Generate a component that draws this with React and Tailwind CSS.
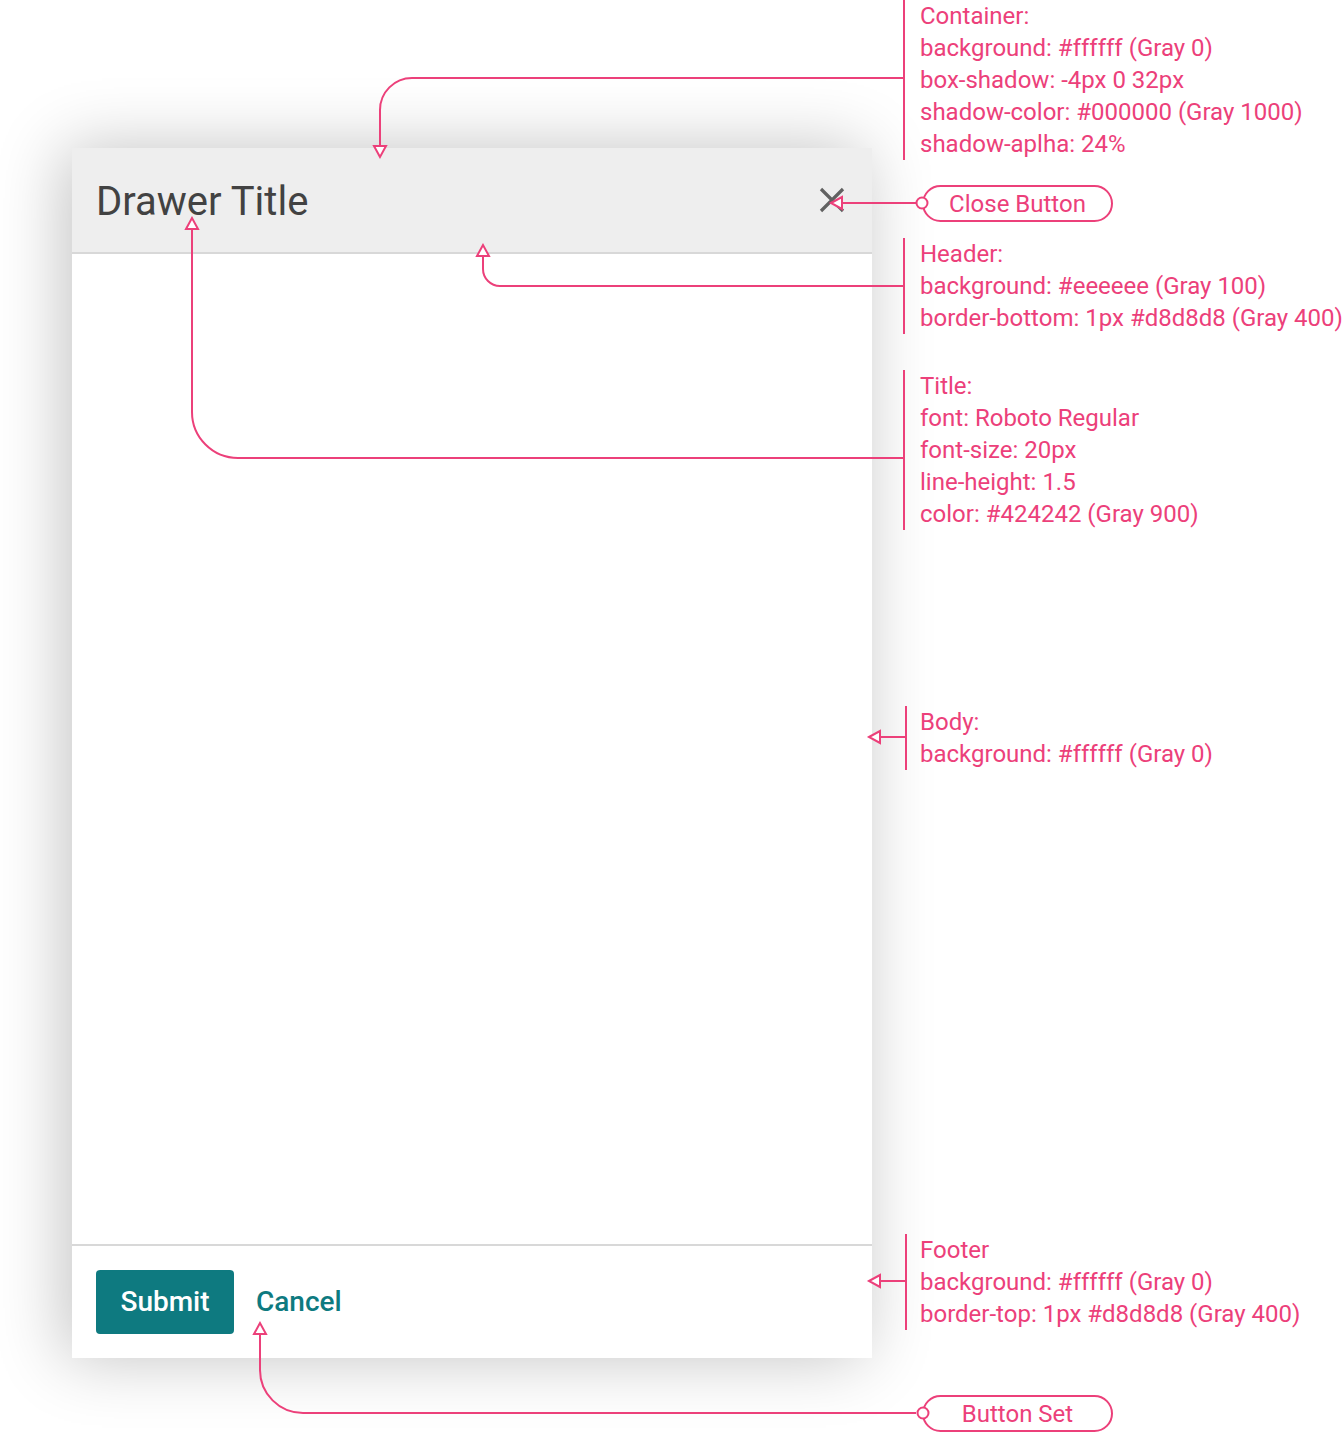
import React from 'react'

const PINK = '#ec407a'

const Note = ({ className, lines }) => (
    <div className={`absolute border-l-2 border-[#ec407a] text-[24px] leading-[32px] text-[#ec407a] whitespace-nowrap ${className}`}>
        {lines.map((l) => (
            <div key={l}>{l}</div>
        ))}
    </div>
)

const Pill = ({ className, children }) => (
    <div className={`absolute flex h-[37px] w-[191px] items-center justify-center rounded-full border-2 border-[#ec407a] bg-white text-[24px] text-[#ec407a] ${className}`}>
        {children}
    </div>
)

// outlined triangle arrow heads
const tri = (x, y, dir) => {
    const s = 6
    const l = 11
    let pts
    if (dir === 'down') pts = `${x},${y} ${x - s},${y - l} ${x + s},${y - l}`
    if (dir === 'up') pts = `${x},${y} ${x - s},${y + l} ${x + s},${y + l}`
    if (dir === 'left') pts = `${x},${y} ${x + l},${y - s} ${x + l},${y + s}`
    return <polygon points={pts} fill="white" stroke={PINK} strokeWidth="2" strokeLinejoin="miter" />
}

const Connectors = () => (
    <svg className="pointer-events-none absolute inset-0" width="1342" height="1432" viewBox="0 0 1342 1432" fill="none">
        <g stroke={PINK} strokeWidth="2">
            {/* container */}
            <path d="M903 78 H412 A32 32 0 0 0 380 110 V146" />
            {/* close button */}
            <path d="M916 203 H842" />
            {/* header */}
            <path d="M903 286 H500 A17 17 0 0 1 483 269 V256" />
            {/* title */}
            <path d="M903 458 H238 A46 46 0 0 1 192 412 V229" />
            {/* body */}
            <path d="M906 737 H881" />
            {/* footer */}
            <path d="M906 1281 H881" />
            {/* button set */}
            <path d="M916 1413 H303 A43 43 0 0 1 260 1370 V1334" />
        </g>
        {tri(380, 157, 'down')}
        {tri(831, 203, 'left')}
        {tri(483, 245, 'up')}
        {tri(192, 218, 'up')}
        {tri(869, 737, 'left')}
        {tri(869, 1281, 'left')}
        {tri(260, 1323, 'up')}
        <circle cx="922" cy="203" r="5.5" fill="white" stroke={PINK} strokeWidth="2" />
        <circle cx="923" cy="1413" r="5.5" fill="white" stroke={PINK} strokeWidth="2" />
    </svg>
)

const App = () => {
    return (
        <div className="relative h-[1432px] w-[1342px] overflow-hidden bg-white font-['Roboto',sans-serif]">
            <div className="pl-[72px] pt-[148px]">
                <div className="flex h-[1210px] w-[800px] flex-col bg-white shadow-[-8px_0_64px_rgba(0,0,0,0.24)]">
                    <div className="flex h-[106px] items-center justify-between border-b-2 border-[#d8d8d8] bg-[#eeeeee] pl-[24px] pr-[26px]">
                        <h1 className="pt-[3px] text-[40px] leading-[60px] text-[#424242]">Drawer Title</h1>
                        <button className="flex h-[28px] w-[28px] items-center justify-center">
                            <svg width="26" height="26" viewBox="0 0 26 26">
                                <path d="M2 2 L24 24 M24 2 L2 24" stroke="#616161" strokeWidth="3.2" />
                            </svg>
                        </button>
                    </div>
                    <div className="flex-1 bg-white" />
                    <div className="flex items-center gap-[22px] border-t-2 border-[#d8d8d8] bg-white p-[24px]">
                        <button className="h-[64px] w-[138px] rounded-[4px] bg-[#0e7a80] text-[28px] font-medium text-white">
                            Submit
                        </button>
                        <button className="text-[28px] font-medium text-[#0e7a80]">Cancel</button>
                    </div>
                </div>
            </div>

            <Note
                className="left-[903px] top-0 pl-[15px]"
                lines={[
                    'Container:',
                    'background: #ffffff (Gray 0)',
                    'box-shadow: -4px 0 32px',
                    'shadow-color: #000000 (Gray 1000)',
                    'shadow-aplha: 24%',
                ]}
            />
            <Note
                className="left-[903px] top-[238px] pl-[15px]"
                lines={['Header:', 'background: #eeeeee (Gray 100)', 'border-bottom: 1px #d8d8d8 (Gray 400)']}
            />
            <Note
                className="left-[903px] top-[370px] pl-[15px]"
                lines={['Title:', 'font: Roboto Regular', 'font-size: 20px', 'line-height: 1.5', 'color: #424242 (Gray 900)']}
            />
            <Note className="left-[905px] top-[706px] pl-[13px]" lines={['Body:', 'background: #ffffff (Gray 0)']} />
            <Note
                className="left-[905px] top-[1234px] pl-[13px]"
                lines={['Footer', 'background: #ffffff (Gray 0)', 'border-top: 1px #d8d8d8 (Gray 400)']}
            />

            <Pill className="left-[922px] top-[185px]">Close Button</Pill>
            <Pill className="left-[922px] top-[1395px]">Button Set</Pill>

            <Connectors />
        </div>
    )
}

export default App
